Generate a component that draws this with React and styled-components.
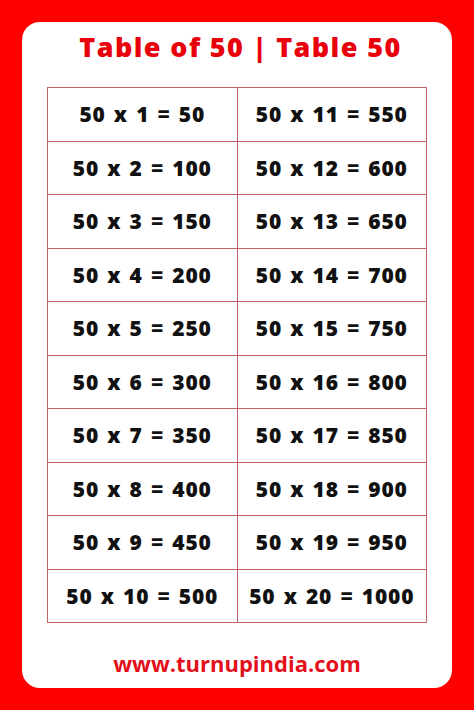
import React from "react";
import styled, { createGlobalStyle } from "styled-components";

const GlobalStyle = createGlobalStyle`
  html, body {
    margin: 0;
    padding: 0;
    background: #ff0000;
  }
  body {
    font-family: "Open Sans", "Liberation Sans", sans-serif;
  }
`;

const Page = styled.div`
  width: 474px;
  height: 710px;
  background: #ff0000;
  padding: 22px;
  box-sizing: border-box;
`;

const Card = styled.div`
  width: 430px;
  height: 666px;
  background: #ffffff;
  border-radius: 18px;
  padding: 0 25px;
  box-sizing: border-box;
  display: flex;
  flex-direction: column;
`;

const Title = styled.h1`
  margin: 7px 0 22px 0;
  padding-left: 7px;
  height: 36px;
  line-height: 36px;
  text-align: center;
  color: #e8000b;
  font-size: 27px;
  font-weight: 800;
  letter-spacing: 1.4px;
  white-space: nowrap;
`;

const Grid = styled.div`
  display: grid;
  grid-template-columns: 1fr 1fr;
  grid-auto-rows: 53.5px;
  width: 380px;
  border-top: 1px solid #c46068;
  border-left: 1px solid #c46068;
  box-sizing: border-box;
`;

const Cell = styled.div`
  display: flex;
  align-items: center;
  justify-content: center;
  border-right: 1px solid #c46068;
  border-bottom: 1px solid #c46068;
  color: #111111;
  font-size: 21px;
  font-weight: 800;
  letter-spacing: 0.8px;
  word-spacing: 2px;
  white-space: nowrap;
`;

const Footer = styled.div`
  margin-top: 26px;
  line-height: 28px;
  text-align: center;
  color: #e3101c;
  font-size: 22px;
  font-weight: 700;
`;

const rows = Array.from({ length: 10 }, (_, i) => i + 1);

const App = () => {
  return (
    <>
      <GlobalStyle />
      <Page>
        <Card>
          <Title>Table of 50 | Table 50</Title>
          <Grid>
            {rows.map((n) => (
              <React.Fragment key={n}>
                <Cell>{`50 x ${n} = ${50 * n}`}</Cell>
                <Cell>{`50 x ${n + 10} = ${50 * (n + 10)}`}</Cell>
              </React.Fragment>
            ))}
          </Grid>
          <Footer>www.turnupindia.com</Footer>
        </Card>
      </Page>
    </>
  );
};

export default App;
